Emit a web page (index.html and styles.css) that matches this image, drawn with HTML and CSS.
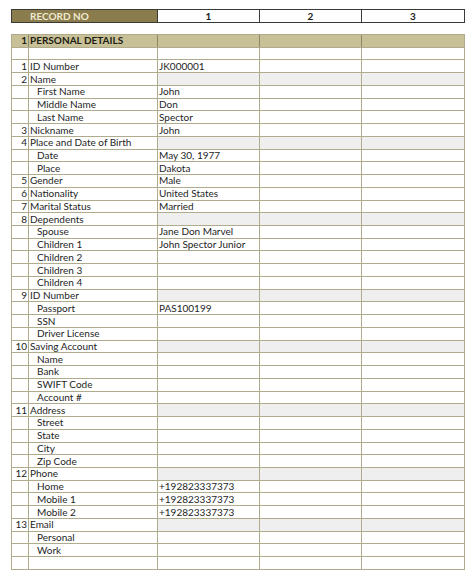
FILE: index.html
```html
<!DOCTYPE html>
<html>
<head>
<meta charset="utf-8">
<link rel="stylesheet" href="styles.css">
</head>
<body>
<div class="page">
  <div class="record">
    <div class="rec-label">RECORD NO</div>
    <div class="rec-num">1</div>
    <div class="rec-num">2</div>
    <div class="rec-num">3</div>
  </div>

  <div class="sheet">
    <div class="row head"><div class="num">1</div><div class="lbl">PERSONAL DETAILS</div><div></div><div></div><div></div></div>
    <div class="row"><div class="num"></div><div class="lbl"></div><div></div><div></div><div></div></div>
    <div class="row"><div class="num">1</div><div class="lbl">ID Number</div><div class="val">JK000001</div><div></div><div></div></div>
    <div class="row grp"><div class="num">2</div><div class="lbl">Name</div><div></div><div></div><div></div></div>
    <div class="row"><div class="num"></div><div class="lbl sub">First Name</div><div class="val">John</div><div></div><div></div></div>
    <div class="row"><div class="num"></div><div class="lbl sub">Middle Name</div><div class="val">Don</div><div></div><div></div></div>
    <div class="row"><div class="num"></div><div class="lbl sub">Last Name</div><div class="val">Spector</div><div></div><div></div></div>
    <div class="row"><div class="num">3</div><div class="lbl">Nickname</div><div class="val">John</div><div></div><div></div></div>
    <div class="row grp"><div class="num">4</div><div class="lbl">Place and Date of Birth</div><div></div><div></div><div></div></div>
    <div class="row"><div class="num"></div><div class="lbl sub">Date</div><div class="val">May 30, 1977</div><div></div><div></div></div>
    <div class="row"><div class="num"></div><div class="lbl sub">Place</div><div class="val">Dakota</div><div></div><div></div></div>
    <div class="row"><div class="num">5</div><div class="lbl">Gender</div><div class="val">Male</div><div></div><div></div></div>
    <div class="row"><div class="num">6</div><div class="lbl">Nationality</div><div class="val">United States</div><div></div><div></div></div>
    <div class="row"><div class="num">7</div><div class="lbl">Marital Status</div><div class="val">Married</div><div></div><div></div></div>
    <div class="row grp"><div class="num">8</div><div class="lbl">Dependents</div><div></div><div></div><div></div></div>
    <div class="row"><div class="num"></div><div class="lbl sub">Spouse</div><div class="val">Jane Don Marvel</div><div></div><div></div></div>
    <div class="row"><div class="num"></div><div class="lbl sub">Children 1</div><div class="val">John Spector Junior</div><div></div><div></div></div>
    <div class="row"><div class="num"></div><div class="lbl sub">Children 2</div><div></div><div></div><div></div></div>
    <div class="row"><div class="num"></div><div class="lbl sub">Children 3</div><div></div><div></div><div></div></div>
    <div class="row"><div class="num"></div><div class="lbl sub">Children 4</div><div></div><div></div><div></div></div>
    <div class="row grp"><div class="num">9</div><div class="lbl">ID Number</div><div></div><div></div><div></div></div>
    <div class="row"><div class="num"></div><div class="lbl sub">Passport</div><div class="val">PAS100199</div><div></div><div></div></div>
    <div class="row"><div class="num"></div><div class="lbl sub">SSN</div><div></div><div></div><div></div></div>
    <div class="row"><div class="num"></div><div class="lbl sub">Driver License</div><div></div><div></div><div></div></div>
    <div class="row grp"><div class="num">10</div><div class="lbl">Saving Account</div><div></div><div></div><div></div></div>
    <div class="row"><div class="num"></div><div class="lbl sub">Name</div><div></div><div></div><div></div></div>
    <div class="row"><div class="num"></div><div class="lbl sub">Bank</div><div></div><div></div><div></div></div>
    <div class="row"><div class="num"></div><div class="lbl sub">SWIFT Code</div><div></div><div></div><div></div></div>
    <div class="row"><div class="num"></div><div class="lbl sub">Account #</div><div></div><div></div><div></div></div>
    <div class="row grp"><div class="num">11</div><div class="lbl">Address</div><div></div><div></div><div></div></div>
    <div class="row"><div class="num"></div><div class="lbl sub">Street</div><div></div><div></div><div></div></div>
    <div class="row"><div class="num"></div><div class="lbl sub">State</div><div></div><div></div><div></div></div>
    <div class="row"><div class="num"></div><div class="lbl sub">City</div><div></div><div></div><div></div></div>
    <div class="row"><div class="num"></div><div class="lbl sub">Zip Code</div><div></div><div></div><div></div></div>
    <div class="row grp"><div class="num">12</div><div class="lbl">Phone</div><div></div><div></div><div></div></div>
    <div class="row"><div class="num"></div><div class="lbl sub">Home</div><div class="val">+192823337373</div><div></div><div></div></div>
    <div class="row"><div class="num"></div><div class="lbl sub">Mobile 1</div><div class="val">+192823337373</div><div></div><div></div></div>
    <div class="row"><div class="num"></div><div class="lbl sub">Mobile 2</div><div class="val">+192823337373</div><div></div><div></div></div>
    <div class="row grp"><div class="num">13</div><div class="lbl">Email</div><div></div><div></div><div></div></div>
    <div class="row"><div class="num"></div><div class="lbl sub">Personal</div><div></div><div></div><div></div></div>
    <div class="row"><div class="num"></div><div class="lbl sub">Work</div><div></div><div></div><div></div></div>
    <div class="row"><div class="num"></div><div class="lbl"></div><div></div><div></div><div></div></div>
  </div>
</div>
</body>
</html>
```

FILE: styles.css
```css
html, body {
  margin: 0;
  padding: 0;
  background: #ffffff;
}

body {
  font-family: Lato, "Liberation Sans", Arial, sans-serif;
  font-size: 10px;
  color: #1e1e1e;
}

.page {
  padding: 9px 0 0 11px;
  width: 454px;
}

.record {
  display: grid;
  grid-template-columns: 145px 101px 101px 102px;
  grid-template-rows: 12px;
  column-gap: 1px;
  padding: 1px;
  background: #3a3a36;
  margin-bottom: 11px;
}

.record > div {
  display: flex;
  align-items: center;
  line-height: 12px;
  font-weight: bold;
}

.rec-label {
  background: #8a7c4c;
  color: #f1ead0;
  padding-left: 18px;
}

.rec-num {
  background: #ffffff;
  color: #1a1a1a;
  justify-content: center;
}

.sheet {
  display: flex;
  flex-direction: column;
  gap: 1px;
  padding: 1px;
  background: #b1ab8d;
}

.row {
  display: grid;
  grid-template-columns: 16px 128px 101px 101px 102px;
  column-gap: 1px;
  height: 11.74px;
}

.row > div {
  background: #ffffff;
  display: flex;
  align-items: center;
  white-space: nowrap;
  overflow: visible;
  line-height: 11px;
}

.row.head {
  background: #8d876a;
}

.row.head > div {
  background: #c8c198;
  font-weight: bold;
  color: #1c1c14;
}

.row.grp > div:nth-child(n+3) {
  background: #efeff0;
}

.num {
  justify-content: flex-end;
  padding-right: 1px;
}

.lbl {
  padding-left: 1px;
}

.lbl.sub {
  padding-left: 8px;
}

.val {
  padding-left: 1px;
}
```
